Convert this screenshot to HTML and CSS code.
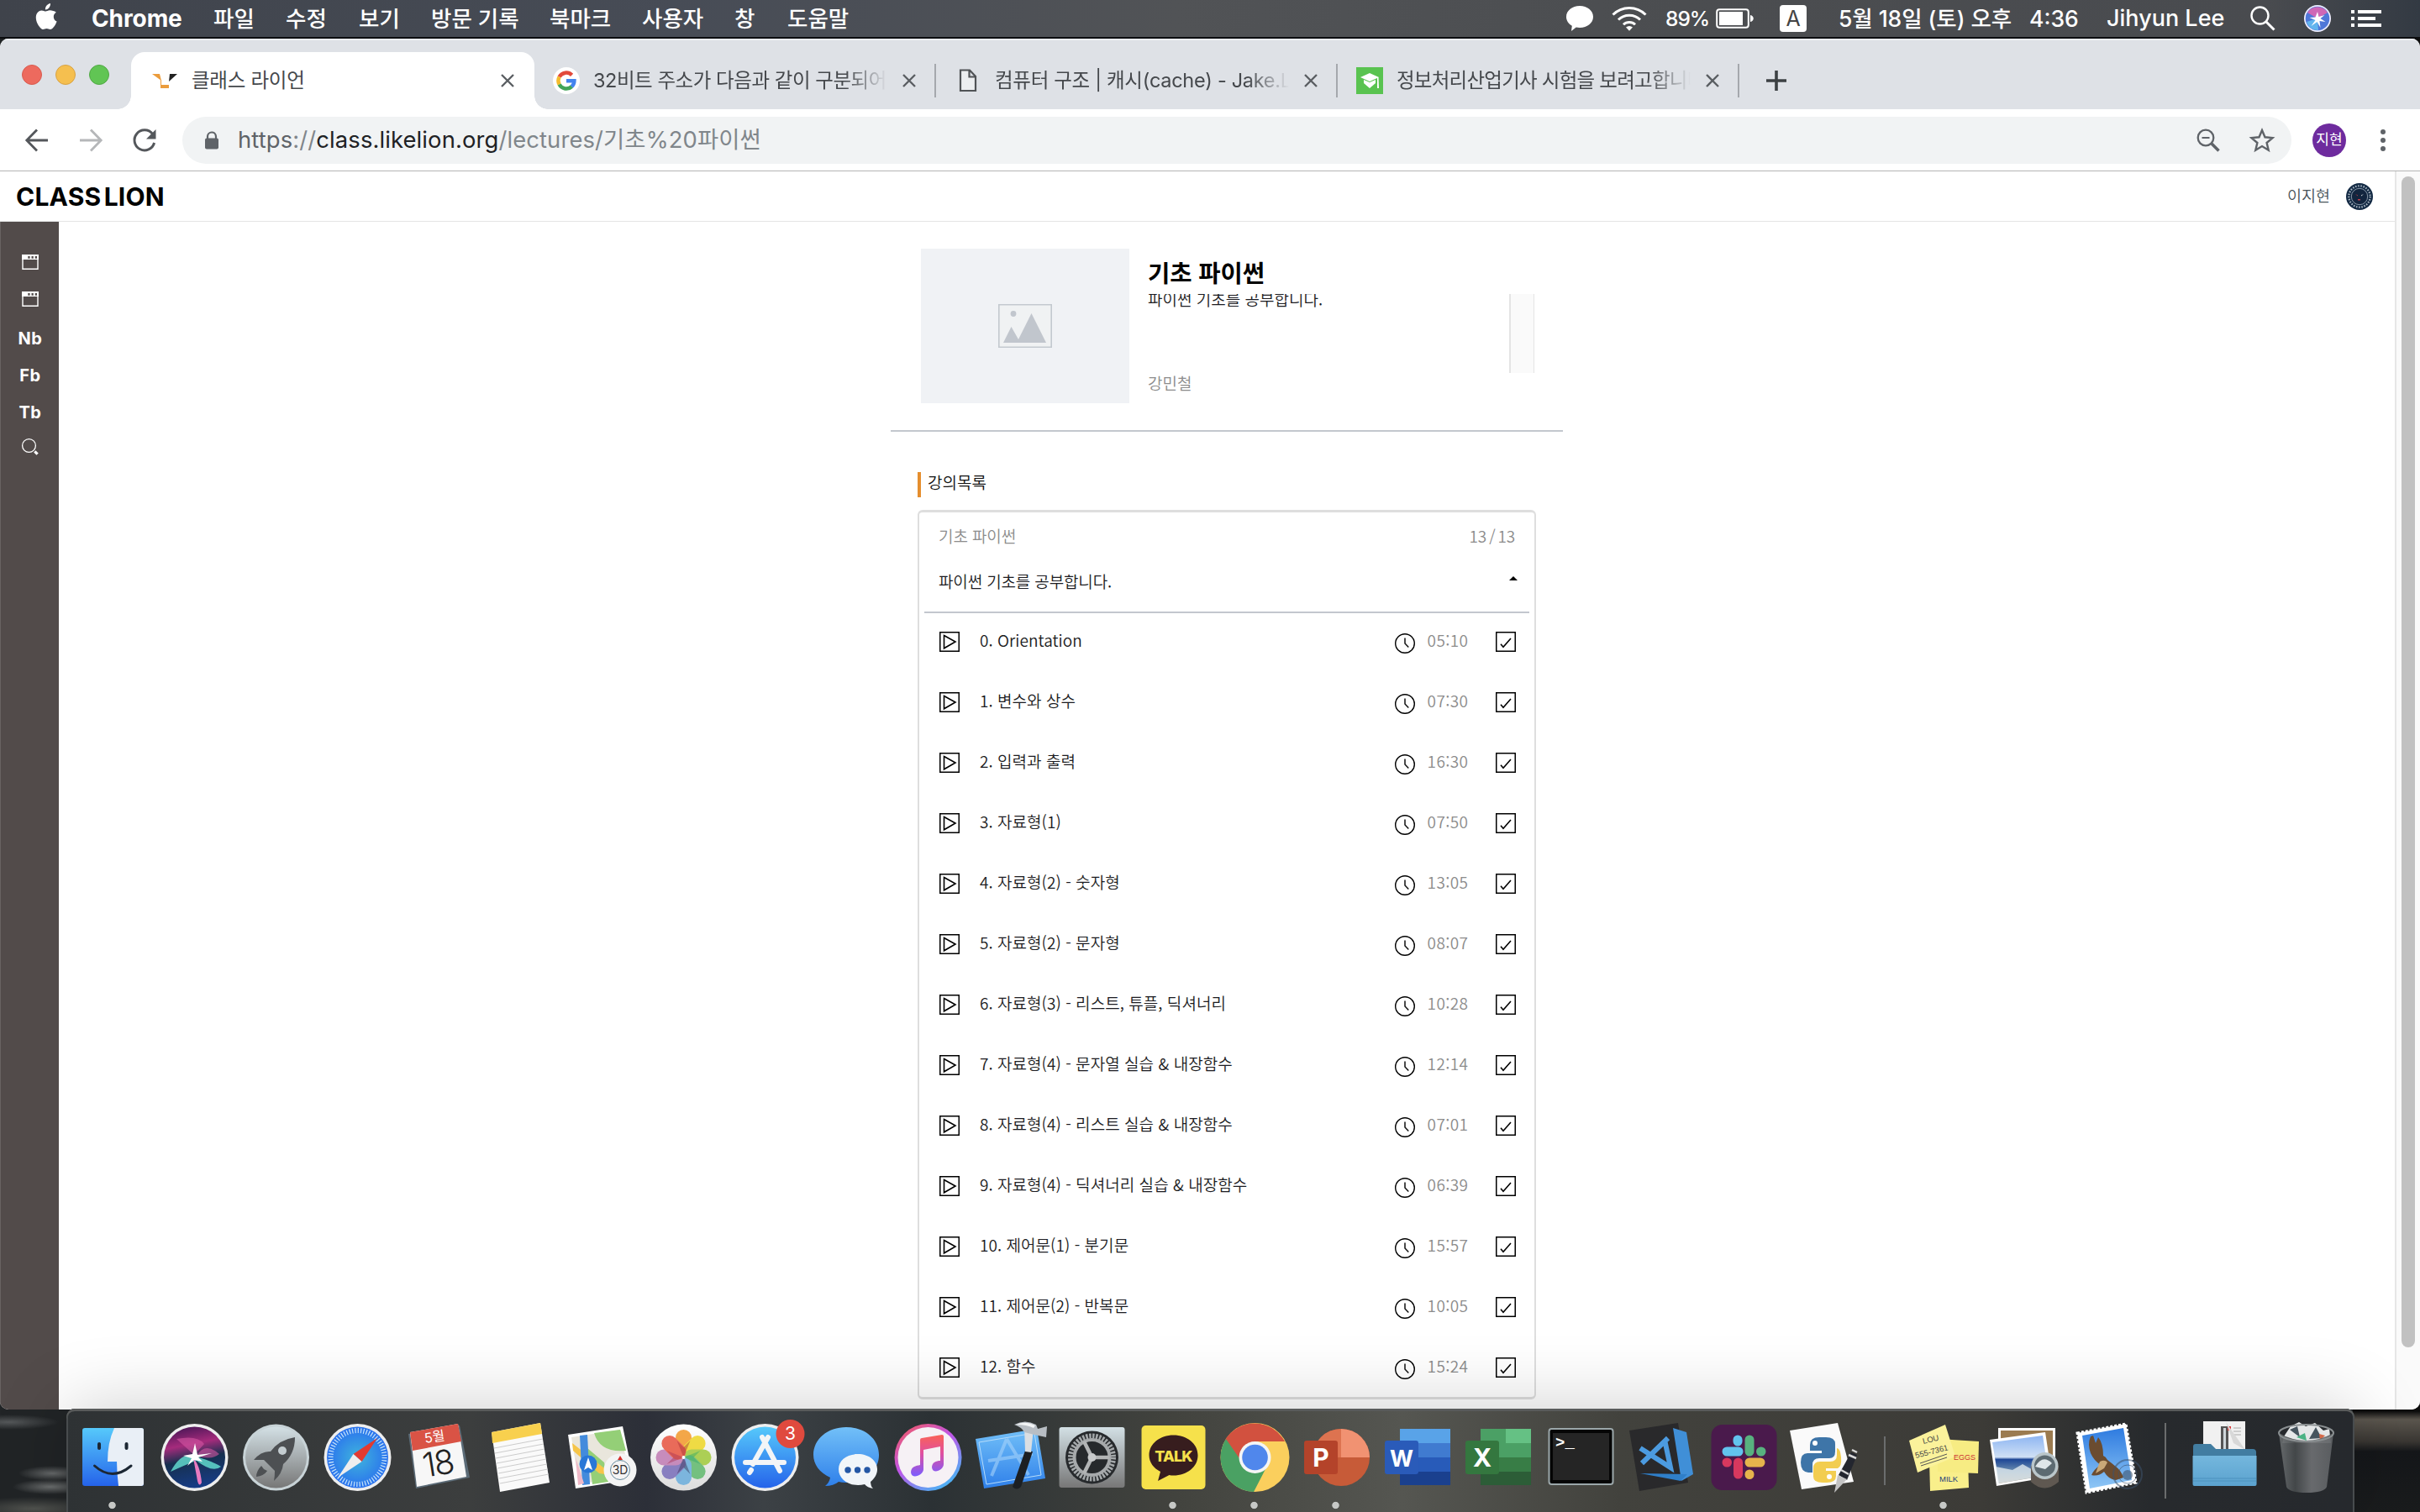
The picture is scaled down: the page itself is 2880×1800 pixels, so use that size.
FILE: index.html
```html
<!DOCTYPE html>
<html lang="ko">
<head>
<meta charset="utf-8">
<title>클래스 라이언</title>
<link rel="stylesheet" href="styles.css">
</head>
<body>
<svg class="defs" width="0" height="0">
  <defs>
    <linearGradient id="gBlue" x1="0" y1="0" x2="0" y2="1"><stop offset="0" stop-color="#56c9fb"/><stop offset="1" stop-color="#2563ea"/></linearGradient>
    <linearGradient id="gMsg" x1="0" y1="0" x2="0" y2="1"><stop offset="0" stop-color="#72c0f8"/><stop offset="1" stop-color="#2f80ea"/></linearGradient>
    <linearGradient id="gWhite" x1="0" y1="0" x2="0" y2="1"><stop offset="0" stop-color="#fff"/><stop offset="1" stop-color="#dcdcdc"/></linearGradient>
    <linearGradient id="gSteel" x1="0" y1="0" x2="0" y2="1"><stop offset="0" stop-color="#d3e0e5"/><stop offset="1" stop-color="#777"/></linearGradient>
    <linearGradient id="gNote" x1="0" y1="0" x2=".7" y2="1"><stop offset="0" stop-color="#fa5a50"/><stop offset=".5" stop-color="#c055e8"/><stop offset="1" stop-color="#48b5f5"/></linearGradient>
    <linearGradient id="gSong" x1="0" y1="0" x2="0" y2="1"><stop offset="0" stop-color="#fa6256"/><stop offset=".45" stop-color="#e04fa0"/><stop offset="1" stop-color="#7a5cff"/></linearGradient>
    <radialGradient id="gSafari"><stop offset="0" stop-color="#3fb4dc"/><stop offset="1" stop-color="#2a72ee"/></radialGradient>
    <linearGradient id="gSiri" x1=".3" y1="0" x2=".5" y2="1"><stop offset="0" stop-color="#4a1657"/><stop offset=".3" stop-color="#a52b7c"/><stop offset=".55" stop-color="#16304f"/><stop offset="1" stop-color="#173c86"/></linearGradient>
    <linearGradient id="gSky" x1="0" y1="0" x2="0" y2="1"><stop offset="0" stop-color="#8db5f2"/><stop offset=".45" stop-color="#cfe0f5"/><stop offset=".5" stop-color="#1e4796"/><stop offset=".75" stop-color="#6d8fb0"/><stop offset="1" stop-color="#b9a78c"/></linearGradient>
    <linearGradient id="gStamp" x1="0" y1="0" x2="0" y2="1"><stop offset="0" stop-color="#2e7be0"/><stop offset="1" stop-color="#8ec6f5"/></linearGradient>
    <linearGradient id="gFolder" x1="0" y1="0" x2="0" y2="1"><stop offset="0" stop-color="#74b7dd"/><stop offset="1" stop-color="#5ba2cf"/></linearGradient>
    <linearGradient id="gBin" x1="0" y1="0" x2="1" y2="0"><stop offset="0" stop-color="#6b6f71"/><stop offset=".3" stop-color="#45494b"/><stop offset=".6" stop-color="#6d6f72"/><stop offset="1" stop-color="#5d6063"/></linearGradient>
    <symbol id="play" viewBox="0 0 24 24"><rect x=".75" y=".75" width="22.5" height="22.5" fill="#fff" stroke="#000" stroke-width="1.5"/><path d="M5.5 4.500 19 12 5.500 19.800Z" fill="none" stroke="#000" stroke-width="1.600"/></symbol>
    <symbol id="clock" viewBox="0 0 24 24"><circle cx="12" cy="12" r="11.300" fill="#fff" stroke="#000" stroke-width="1.400"/><path d="M12 5.500V12l4.300 4.600" fill="none" stroke="#111" stroke-width="1.500"/></symbol>
    <symbol id="check" viewBox="0 0 24 24"><rect x=".75" y=".75" width="22.5" height="22.5" fill="#fff" stroke="#000" stroke-width="1.500"/><path d="m6 14.800 3 3.400L18 8" fill="none" stroke="#000" stroke-width="1.600"/></symbol>
    <symbol id="close" viewBox="0 0 16 16"><path d="m1 1 14 14M15 1 1 15" stroke="#5a5e62" stroke-width="2.400"/></symbol>
    <symbol id="window" viewBox="0 0 20 18"><path d="M1 .8h18v16.400H1z" fill="none" stroke="#fff" stroke-width="1.400"/><path d="M0 0h20v6H0z" fill="#fff"/><path d="M7.300 2h2.300v2.700H7.300zM11.500 2h2.300v2.700h-2.300zM15.700 2H18v2.700h-2.300z" fill="#524b4a"/></symbol>
  </defs>
</svg>

<header class="menubar">
  <svg class="apple" viewBox="0 0 26 32"><path fill="#fff" d="M18 0c.2 2.200-.7 4-1.800 5.400-1.200 1.300-2.700 2.100-4.300 2C11.700 5.400 12.700 3.500 13.800 2.300 15 1 16.700.1 18 0ZM24.800 10.700c-2 1.300-3 2.900-3 5.200 0 2.700 1.500 4.600 3.800 5.500-.8 2.500-2.200 5-4 7.100-1.100 1.300-2.200 2.400-3.800 2.400-1.700 0-2.200-1-4.300-1-2 0-2.700 1-4.300 1-1.600.1-2.800-1.300-3.900-2.600C1.500 23.900-.6 16.600 1.800 12.200 3 9.900 5.300 8.400 7.700 8.400c1.800 0 3.400 1.200 4.500 1.200 1.100 0 3.100-1.400 5.300-1.300 2.200.1 5.500.8 7.300 2.400Z"/></svg>
  <nav class="menus">
    <b>Chrome</b><span class="w86">파일</span><span class="w87">수정</span><span class="w86">보기</span><span class="w141">방문 기록</span><span class="w110">북마크</span><span class="w110">사용자</span><span class="w63">창</span><span>도움말</span>
  </nav>
  <div class="status">
    <svg class="bubble" viewBox="0 0 32 30"><path fill="#fff" d="M16 0c9 0 16 5.600 16 13s-7 13-16 13c-1.500 0-3-.2-4.300-.5L6 30l.8-6.300C2.700 21.400 0 17.500 0 13 0 5.600 7 0 16 0Z"/></svg>
    <svg class="wifi" viewBox="0 0 42 30" fill="none" stroke="#fff" stroke-width="3"><path d="M1.500 10.500a27.500 27.500 0 0 1 39 0M8 16.500a18.500 18.500 0 0 1 26 0M14 22.300a10 10 0 0 1 14 0"/><path d="m17 25.500 4 4.200 4-4.200a6 6 0 0 0-8 0Z" fill="#fff" stroke="none"/></svg>
    <span class="pct">89%</span>
    <svg class="batt" viewBox="0 0 46 24"><rect x="1.200" y="1.200" width="37.600" height="21.600" rx="3" fill="none" stroke="#fff" stroke-width="2"/><path fill="#fff" d="M4 4h28v16H4zM41 8c5 1 5 7 0 8z"/></svg>
    <span class="input">A</span>
    <span class="date">5월 18일 (토) 오후</span><span class="time">4:36</span>
    <span class="user">Jihyun Lee</span>
    <svg class="spot" viewBox="0 0 30 30" fill="none" stroke="#fff"><circle cx="11.500" cy="11.500" r="10" stroke-width="2.400"/><path d="m18.500 18.500 10 10" stroke-width="3"/></svg>
    <svg class="siri-s" viewBox="0 0 32 32"><circle cx="16" cy="16" r="16" fill="#eef"/><circle cx="16" cy="16" r="14.300" fill="#4f77d8"/><path d="M4 9A14 14 0 0 1 28 9l-12 7z" fill="#cf67b6"/><path d="M3 20l13-4 1 14a14 14 0 0 1-14-10z" fill="#62b5ee"/><path d="m16 8 1.500 6 7-2-5 4 6 4-7-1 1 8-4-7-7 5 5-7-7-3 7-.500z" fill="#fff"/></svg>
    <svg class="list" viewBox="0 0 36 20" fill="#fff"><path d="M0 0h4v4H0zM0 8h4v4H0zM0 16h4v4H0zM8 0h28v4H8zM8 8h21v4H8zM8 16h28v4H8z"/></svg>
  </div>
</header>

<main class="window">
  <div class="tabs">
    <div class="lights"><i class="red-dot"></i><i class="yellow"></i><i class="green"></i></div>
    <div class="tab active">
      <svg class="fav" viewBox="0 0 32 32"><path d="M1 8h9l2 8z" fill="#eb9c3c"/><path d="M31 8h-9l-1 9z" fill="#222"/><path d="M11 15h1v6h9v4H11z" fill="#eb9c3c"/></svg>
      <span class="title">클래스 라이언</span><svg class="x"><use href="#close"/></svg>
    </div>
    <div class="tab">
      <svg class="fav" viewBox="0 0 32 32"><circle cx="16" cy="16" r="16" fill="#fff"/><g fill="none" stroke-width="4.500"><path d="M7.600 11.500a9.500 9.500 0 0 1 15-2.100" stroke="#e24a3b"/><path d="M7.600 20.500a9.500 9.500 0 0 1 0-9" stroke="#f5bc2e"/><path d="M22.500 23a9.500 9.500 0 0 1-14.900-2.500" stroke="#41a457"/><path d="M16 16.300h9.400a9.500 9.500 0 0 1-3 6.800" stroke="#4384ee"/></g></svg>
      <span class="title fade t1">32비트 주소가 다음과 같이 구분되어</span><svg class="x"><use href="#close"/></svg><i class="sep"></i>
    </div>
    <div class="tab">
      <svg class="fav" viewBox="0 0 32 32"><path d="M7 3.500h11L25 11v17H7z M17.500 4v7.500H25" fill="#eceef0" stroke="#505356" stroke-width="2.200"/></svg>
      <span class="title fade t2">컴퓨터 구조 | 캐시(cache) - Jake.L</span><svg class="x"><use href="#close"/></svg><i class="sep"></i>
    </div>
    <div class="tab">
      <svg class="fav" viewBox="0 0 32 32"><path fill="#59c350" d="M0 0h32v32H0z"/><path fill="#fff" d="m16 7 11 5-11 5-11-5z"/><path fill="#fff" d="m9 15 7 3 7-3v4l-7 6-7-6zM25 12h1.500l.5 13h-2z"/></svg>
      <span class="title fade t3">정보처리산업기사 시험을 보려고합니다</span><svg class="x"><use href="#close"/></svg><i class="sep"></i>
    </div>
    <svg class="plus" viewBox="0 0 24 24"><path d="M12 0v24M0 12h24" stroke="#3c4043" stroke-width="3.600"/></svg>
  </div>

  <div class="toolbar">
    <svg class="nav" viewBox="0 0 28 28" fill="none" stroke="#54575b" stroke-width="2.800"><path d="M27 14H2M14 1.500 1.800 14 14 26.500"/></svg>
    <svg class="nav" viewBox="0 0 28 28" fill="none" stroke="#b5b7b9" stroke-width="2.800"><path d="M1 14h25M14 1.500 26.200 14 14 26.500"/></svg>
    <svg class="nav" viewBox="0 0 28 28"><path d="M23.500 6.500A12 12 0 1 0 25.600 17" fill="none" stroke="#54575b" stroke-width="3"/><path d="M27.500 1v11.500H16z" fill="#54575b"/></svg>
    <div class="omnibox">
      <svg class="lock" viewBox="0 0 18 22"><path d="M4 9V6.500a5 5 0 0 1 10 0V9" fill="none" stroke="#5f6368" stroke-width="2.200"/><rect y="8.500" x="1" width="16" height="13" rx="2" fill="#5f6368"/></svg>
      <span class="url"><span class="proto">https</span>://<b>class.likelion.org</b>/lectures/기초%20파이썬</span>
      <svg class="mag" viewBox="0 0 28 28" fill="none" stroke="#5f6368"><circle cx="11" cy="11" r="9.300" stroke-width="2.300"/><path d="m18 18 8.500 8.500" stroke-width="3.500"/><path d="M6.500 11h9" stroke-width="2"/></svg>
      <svg class="star" viewBox="0 0 30 30"><path d="m15 3 3.500 8.300 9 .8-6.900 5.900 2.100 8.800L15 22.100l-7.700 4.700 2.100-8.800-6.900-5.900 9-.8z" fill="none" stroke="#5f6368" stroke-width="2.400"/></svg>
    </div>
    <span class="profile">지현</span>
    <svg class="dots" viewBox="0 0 6 26" fill="#5f6368"><circle cx="3" cy="3" r="3"/><circle cx="3" cy="13" r="3"/><circle cx="3" cy="23" r="3"/></svg>
  </div>

  <div class="viewport">
    <div class="page">
      <div class="site-head">
        <strong>CLASS LION</strong>
        <span class="name">이지현</span>
        <svg class="crest" viewBox="0 0 32 32"><circle cx="16" cy="16" r="16" fill="#142b45"/><circle cx="16" cy="16" r="12.700" fill="none" stroke="#aab6c2" stroke-width="2.200" stroke-dasharray="1.500 1.700"/><circle cx="16" cy="16" r="9.700" fill="#12253e" stroke="#8796a6"/><path d="m11 13 3 1.500v1zM14 19h3v1.500h-3z" fill="#c33c4a"/><path d="m21 13-3 1.500v1z" fill="#fff"/></svg>
      </div>
      <div class="columns">
        <aside>
          <svg class="win"><use href="#window"/></svg><svg class="win"><use href="#window"/></svg>
          <b>Nb</b><b>Fb</b><b>Tb</b>
          <svg class="find" viewBox="0 0 20 20"><circle cx="8.500" cy="8.500" r="7.900" fill="none" stroke="#fff" stroke-width="1.300"/><path d="m15.300 15.300 3.300 3.300" stroke="#fff" stroke-width="3.200"/></svg>
        </aside>
        <section class="content">
          <div class="course">
            <div class="thumb"><svg viewBox="0 0 64 52"><path d="M.8.8h62.400v50.400H.8z" fill="#f0f2f3" stroke="#c3c9cf" stroke-width="1.600"/><circle cx="18" cy="11.500" r="3.400" fill="#c1c6cd"/><path d="M6 46 15.500 27 24 42 39.500 11 57 46z" fill="#c1c6cd"/></svg></div>
            <div class="info">
              <h1>기초 파이썬</h1>
              <div class="summary"><p>파이썬 기초를 공부합니다.</p><i></i></div>
              <span class="teacher">강민철</span>
            </div>
          </div>
          <h2>강의목록</h2>
          <div class="card">
            <div class="card-top"><span>기초 파이썬</span><span class="count">13 / 13</span></div>
            <div class="card-desc"><span>파이썬 기초를 공부합니다.</span><svg viewBox="0 0 10 5"><path d="M0 5 5 0l5 5z"/></svg></div>
            <ul>
              <li><svg><use href="#play"/></svg><span>0. Orientation</span><svg class="ck"><use href="#clock"/></svg><time>05:10</time><svg><use href="#check"/></svg></li>
              <li><svg><use href="#play"/></svg><span>1. 변수와 상수</span><svg class="ck"><use href="#clock"/></svg><time>07:30</time><svg><use href="#check"/></svg></li>
              <li><svg><use href="#play"/></svg><span>2. 입력과 출력</span><svg class="ck"><use href="#clock"/></svg><time>16:30</time><svg><use href="#check"/></svg></li>
              <li><svg><use href="#play"/></svg><span>3. 자료형(1)</span><svg class="ck"><use href="#clock"/></svg><time>07:50</time><svg><use href="#check"/></svg></li>
              <li><svg><use href="#play"/></svg><span>4. 자료형(2) - 숫자형</span><svg class="ck"><use href="#clock"/></svg><time>13:05</time><svg><use href="#check"/></svg></li>
              <li><svg><use href="#play"/></svg><span>5. 자료형(2) - 문자형</span><svg class="ck"><use href="#clock"/></svg><time>08:07</time><svg><use href="#check"/></svg></li>
              <li><svg><use href="#play"/></svg><span>6. 자료형(3) - 리스트, 튜플, 딕셔너리</span><svg class="ck"><use href="#clock"/></svg><time>10:28</time><svg><use href="#check"/></svg></li>
              <li><svg><use href="#play"/></svg><span>7. 자료형(4) - 문자열 실습 &amp; 내장함수</span><svg class="ck"><use href="#clock"/></svg><time>12:14</time><svg><use href="#check"/></svg></li>
              <li><svg><use href="#play"/></svg><span>8. 자료형(4) - 리스트 실습 &amp; 내장함수</span><svg class="ck"><use href="#clock"/></svg><time>07:01</time><svg><use href="#check"/></svg></li>
              <li><svg><use href="#play"/></svg><span>9. 자료형(4) - 딕셔너리 실습 &amp; 내장함수</span><svg class="ck"><use href="#clock"/></svg><time>06:39</time><svg><use href="#check"/></svg></li>
              <li><svg><use href="#play"/></svg><span>10. 제어문(1) - 분기문</span><svg class="ck"><use href="#clock"/></svg><time>15:57</time><svg><use href="#check"/></svg></li>
              <li><svg><use href="#play"/></svg><span>11. 제어문(2) - 반복문</span><svg class="ck"><use href="#clock"/></svg><time>10:05</time><svg><use href="#check"/></svg></li>
              <li><svg><use href="#play"/></svg><span>12. 함수</span><svg class="ck"><use href="#clock"/></svg><time>15:24</time><svg><use href="#check"/></svg></li>
            </ul>
          </div>
        </section>
      </div>
    </div>
    <div class="scroll"><i></i></div>
  </div>
</main>

<footer class="dock">
  <!-- Finder -->
  <svg class="app on" viewBox="0 0 97 120"><rect x="12" y="20" width="73" height="69" rx="3" fill="url(#gBlue)"/><path d="M50 20h32q3 0 3 3v63q0 3-3 3H55q-2-15-2-29H42q0-23 8-40z" fill="#e9eff6"/><path d="M32 39v5M64.500 39v5" stroke="#1c2733" stroke-width="4" stroke-linecap="round"/><path d="M26.500 65q21 19 43.500 0" fill="none" stroke="#1c2733" stroke-width="3" stroke-linecap="round"/></svg>
  <!-- Siri -->
  <svg class="app" viewBox="0 0 97 120"><circle cx="48.500" cy="55" r="40" fill="#eee"/><circle cx="48.500" cy="55" r="36.500" fill="url(#gSiri)"/><path d="M48 52 27 33q25-5 33 6zM51 53q10-17 27-2-10 8-27 2z" fill="#d657a4" opacity=".6"/><path d="M20 72q13-25 29-18 20 5 31 12-10 8-29-7-7 2-31 13z" fill="#65e3d5" opacity=".8"/><path d="M47 56q8 8 10 29-3 6-5-2z" fill="#e97bc0"/><path d="m49 38 3 14 17-2-16 5 5 5-10-2-8 7 5-9-10-3 11-2z" fill="#fff"/></svg>
  <!-- Launchpad -->
  <svg class="app" viewBox="0 0 97 120"><circle cx="48.500" cy="55" r="39.500" fill="#c8d3d7"/><circle cx="48.500" cy="55" r="36.500" fill="url(#gSteel)"/><path d="M71 31Q52 34 42 48q-11-1-20 10h12l13 13q0 6-1 12 10-9 11-20 14-12 14-32zM31 65q-6 6-6 13 9-1 13-7l-4-2z" fill="#4d5053"/><circle cx="56" cy="47" r="5" fill="#c4cdd1"/></svg>
  <!-- Safari -->
  <svg class="app" viewBox="0 0 97 120"><circle cx="48.500" cy="55" r="40" fill="#eee"/><circle cx="48.500" cy="55" r="36.500" fill="url(#gSafari)"/><circle cx="48.500" cy="55" r="32" fill="none" stroke="#c8e4fb" stroke-width="6" stroke-dasharray="1.200 2.150"/><path d="m72 32-18.500 28-10-9z" fill="#e33a31"/><path d="M25 79 43.500 51l10 9z" fill="#eee"/></svg>
  <!-- Calendar -->
  <svg class="app" viewBox="0 0 97 120"><path d="m12 27 61-10 12 62-64 13z" fill="#5b6b77"/><path d="m14 25 57-10 10 63-59 12z" fill="#f7f7f7"/><path d="m14 25 57-10 4 21-58 11z" fill="#d95345"/><text x="44" y="36" transform="rotate(-9 44 36)" class="cal-m">5월</text><text x="49" y="76" transform="rotate(-9 49 76)" class="cal-d">18</text></svg>
  <!-- Notes -->
  <svg class="app" viewBox="0 0 97 120"><path d="m14 25 58-11 11 71-59 11z" fill="#fafafa"/><path d="m14 25 58-11 2 13-59 11z" fill="#f8d04e"/><path d="m17 44 58-11M18 50l58-11M19 56l58-11M20 62l58-11M21 68l58-11M22 74l58-11M23 80l58-11M24 86l58-11" stroke="#ccc"/></svg>
  <!-- Maps -->
  <svg class="app" viewBox="0 0 97 120"><path d="m8 28 65-10 13 63-69 11z" fill="#fff"/><path d="m12 31 58-9 11 55-60 10z" fill="#e9e6dc"/><path d="m39 26 31-4 7 25q-31 3-38-21zM31 44l20 17 5 23-19 3z" fill="#94cf77"/><path d="m13 38 37 29 29 4v8L45 74 14 47z" fill="#f6c549"/><path d="m22 29 9-1 3 59-9 1z" fill="#438bdc"/><path d="m17 55 10 31-7 2z" fill="#efb9c8"/><circle cx="32" cy="63" r="10.500" fill="#2877d7"/><path d="m32 55 5 15-5-3-5 3z" fill="#fff"/><circle cx="70" cy="70" r="19.500" fill="#f4f4f4"/><circle cx="70" cy="70" r="11.500" fill="none" stroke="#648a9c"/><path d="m70 53 3 5h-6z" fill="#d72d2a"/><text x="70" y="75" class="t3d">3D</text></svg>
  <!-- Photos -->
  <svg class="app" viewBox="0 0 97 120"><circle cx="48.500" cy="55" r="39.500" fill="url(#gWhite)"/><g transform="translate(48.500 55)" opacity=".92"><rect x="-9.500" y="-33" width="19" height="33" rx="9.500" fill="#f3a03a"/><rect x="-9.500" y="-33" width="19" height="33" rx="9.500" fill="#efd936" transform="rotate(45)"/><rect x="-9.500" y="-33" width="19" height="33" rx="9.500" fill="#a7cd49" transform="rotate(90)"/><rect x="-9.500" y="-33" width="19" height="33" rx="9.500" fill="#6bbd77" transform="rotate(135)"/><rect x="-9.500" y="-33" width="19" height="33" rx="9.500" fill="#74b2dd" transform="rotate(180)"/><rect x="-9.500" y="-33" width="19" height="33" rx="9.500" fill="#8177bd" transform="rotate(225)"/><rect x="-9.500" y="-33" width="19" height="33" rx="9.500" fill="#c484b8" transform="rotate(270)"/><rect x="-9.500" y="-33" width="19" height="33" rx="9.500" fill="#e9604d" transform="rotate(315)"/></g><g transform="translate(48.500 55)" opacity=".45"><path d="M0 0-4-10-8-20 0-12 8-20 4-10z" fill="#a33"/><path d="M0 0 10-4 20-8 12 0 20 8 10 4z" fill="#3a6"/><path d="M0 0 4 10 8 20 0 12-8 20-4 10z" fill="#335"/><path d="M0 0-10 4-20 8-12 0-20-8-10-4z" fill="#a35"/></g><circle cx="48.500" cy="55" r="2" fill="#fff"/></svg>
  <!-- App Store -->
  <svg class="app" viewBox="0 0 97 120"><circle cx="48.500" cy="55" r="40" fill="#eee"/><circle cx="48.500" cy="55" r="36.500" fill="url(#gBlue)"/><path d="m52 31-18 32M45 31l21 40M25 61h46M32 70l-2 3" stroke="#f3f5f7" stroke-width="6" stroke-linecap="round"/><circle cx="78.500" cy="27" r="17" fill="#e04a3e"/><text x="78.500" y="34" class="badge">3</text></svg>
  <!-- Messages -->
  <svg class="app" viewBox="0 0 97 120"><path d="M48 19c22 0 39 14 39 33S70 85 48 85q-5 0-9-1-6 5-16 5 5-4 6-10C16 73 9 63 9 52c0-19 17-33 39-33z" fill="url(#gMsg)"/><path d="M62 51c13 0 23 8 23 18 0 6-3 11-8 15q0 5 3 8-7-1-10-5-4 1-8 1c-13 0-23-8-23-19s10-18 23-18z" fill="#f1f5f9"/><g fill="#2457a5"><circle cx="50" cy="70" r="3.700"/><circle cx="61.500" cy="70" r="3.700"/><circle cx="73" cy="70" r="3.700"/></g></svg>
  <!-- iTunes -->
  <svg class="app" viewBox="0 0 97 120"><circle cx="48.500" cy="55" r="40" fill="url(#gNote)"/><circle cx="48.500" cy="55" r="36" fill="#f6f1f5"/><path d="M39 34q0-2 2-2l24-4q2 0 2 2v33c0 7-13 13-14 4 0-6 5-8 10-8V42l-20 4v23c0 7-14 13-15 4 0-7 6-8 11-9z" fill="url(#gSong)"/></svg>
  <!-- Xcode -->
  <svg class="app" viewBox="0 0 97 120"><path d="m7 33 73-12 10 59-73 12z" fill="url(#gMsg)"/><path d="m11 37 66-11 8 50-65 11z" fill="none" stroke="#b6dcfa"/><path d="m44 33-18 44M44 33l26 43M22 59l53-8" stroke="#a5d2fa" stroke-width="4" fill="none" opacity=".6"/><path d="m66 47 9 1-14 42q-5 5-10 0z" fill="#1c1f23"/><path d="m65 18 11 2-3 29-7-1z" fill="#dadee2"/><path d="M53 16q13-7 26 0l2 5 11-3-1 13-14-3-12-3q-3-6-12-9z" fill="#b8bec4"/><path d="M55 16q12-5 23 1l-2 3q-8-4-21-4z" fill="#f2f4f5"/></svg>
  <!-- System Preferences -->
  <svg class="app" viewBox="0 0 97 120"><rect x="9.500" y="19" width="78" height="72" rx="3" fill="url(#gSteel)"/><circle cx="48.500" cy="55" r="31.500" fill="#26292c"/><circle cx="48.500" cy="55" r="25.500" fill="none" stroke="#a4a8aa" stroke-width="6" stroke-dasharray="2.500 1.500"/><circle cx="48.500" cy="55" r="21" fill="none" stroke="#a6a9ab" stroke-width="4"/><path d="M48.500 55 39 36M48.500 55h21M48.500 55 39 74" stroke="#b2b4b5" stroke-width="4.500"/><circle cx="48.500" cy="55" r="5" fill="#c8cacb"/></svg>
  <!-- KakaoTalk -->
  <svg class="app on" viewBox="0 0 97 120"><rect x="10.500" y="17" width="76" height="76" rx="5" fill="#f6e14b"/><path d="M48.500 28.500c16 0 29 10 29 24s-13 24-29 24q-3 0-5-.500L30 83l3-11c-8-4-13.500-11-13.500-19.500 0-14 13-24 29-24z" fill="#371d1e"/><text x="48.500" y="59.500" class="talk">TALK</text></svg>
  <!-- Chrome -->
  <svg class="app on" viewBox="0 0 97 120"><circle cx="48.500" cy="55" r="41" fill="#fbcf5d"/><path d="M13 34a41 41 0 0 1 71 2H48.500L30 63z" fill="#d2513f"/><path d="M14 33a41 41 0 0 0 33 63L62 67 36 65z" fill="#4aa163"/><circle cx="48.500" cy="55" r="19" fill="#f5f5f5"/><circle cx="48.500" cy="55" r="15.300" fill="#5087ec"/></svg>
  <!-- PowerPoint -->
  <svg class="app on" viewBox="0 0 97 120"><circle cx="54" cy="55" r="34" fill="#c75b38"/><path d="M54 21v34H20a34 34 0 0 1 34-34z" fill="#dd7350"/><path d="M54 21a34 34 0 0 1 34 34H54z" fill="#f19272"/><rect x="10" y="35" width="40" height="40" rx="3" fill="#b4432a"/><text x="30" y="66" class="office">P</text></svg>
  <!-- Word -->
  <svg class="app" viewBox="0 0 97 120"><path fill="#59a3e8" d="M27 21h60v17H27z"/><path fill="#407bd0" d="M27 38h60v17H27z"/><path fill="#285bb9" d="M27 55h60v17H27z"/><path fill="#1a408e" d="M27 72h60v16H27z"/><rect x="9" y="35" width="40" height="40" rx="3" fill="#2a5bb9"/><text x="29" y="66" class="office w">W</text></svg>
  <!-- Excel -->
  <svg class="app" viewBox="0 0 97 120"><path fill="#4ba065" d="M26 21h60v34H26z"/><path fill="#65c184" d="M56 21h30v17H56z"/><path fill="#387d46" d="M26 55h60v17H26z"/><path fill="#2c5d37" d="M26 72h60v16H26z"/><rect x="8" y="35" width="40" height="40" rx="3" fill="#34773f"/><text x="28" y="66" class="office">X</text></svg>
  <!-- Terminal -->
  <svg class="app" viewBox="0 0 97 120"><rect x="10.500" y="21" width="76" height="66" rx="3" fill="#050505" stroke="#9ba7aa" stroke-width="2"/><path fill="#252525" d="M15 26h67v56H15z"/><text x="18" y="43" class="term">&gt;_</text></svg>
  <!-- VS Code -->
  <svg class="app" viewBox="0 0 97 120"><path d="m9 23 58-9 12 71-58 10z" fill="#29292b"/><path d="m61 20 16 5 8 50-14 8z" fill="#408fd7"/><path d="m55 32-31 30M22 44l36 23-7-33" fill="none" stroke="#4c9be0" stroke-width="6"/><path d="m22 74 56 1-8 8z" fill="#2f7fc9"/></svg>
  <!-- Slack -->
  <svg class="app" viewBox="0 0 97 120"><rect x="9.500" y="16" width="78" height="78" rx="13" fill="#4a1a4c"/><path d="M41 34v2M28 48h14" stroke="#62c4ee" stroke-width="11" stroke-linecap="round"/><path d="M55 34v14M68.500 48h.5" stroke="#58b17f" stroke-width="11" stroke-linecap="round"/><path d="M28 61h.5M41.500 61v14" stroke="#d6385e" stroke-width="11" stroke-linecap="round"/><path d="M55 61h13M55 75v.5" stroke="#e5b44c" stroke-width="11" stroke-linecap="round"/></svg>
  <!-- IDLE -->
  <svg class="app" viewBox="0 0 97 120"><path d="m6 23 57-9 19 70-62 9z" fill="#fafafa"/><path d="M41 31q-11 0-11 9v7h14v3H27q-8 0-8 11t9 12h5v-9q0-8 8-8h12q7 0 7-8V39q0-8-11-8z" fill="#3e75a8"/><path d="M62 44v8q0 8-8 8H42q-8 0-8 8v10q0 7 11 7h5q11 0 11-8v-6H49v-3h14q5-2 4-13-1-11-5-11z" fill="#f2cd50"/><circle cx="36" cy="38" r="3" fill="#fff"/><circle cx="53" cy="78" r="3" fill="#fff"/><path d="m64 76 15-27 7 3-12 30z" fill="#23262f"/><path d="m59 97 4-21 11 5z" fill="#c4c4c4"/><path d="m67 70 9 5M76 52l9 4M80 46l6 3" stroke="#d8d8d8" stroke-width="2.500"/></svg>
  <i class="rule short"></i>
  <!-- Stickies -->
  <svg class="app on" viewBox="0 0 97 120"><path d="m31 57 46-1 1 35-46 4z" fill="#f9ef8b"/><path d="m42 33 48 3-1 38-48-2z" fill="#f7ec83"/><path d="m7 35 43-19 12 38-45 19z" fill="#fbf29b"/><text x="24" y="39" transform="rotate(-14 24 39)" class="ink">LOU</text><text x="15" y="56" transform="rotate(-14 15 56)" class="ink">555-7361</text><text x="60" y="58" class="ink red">EGGS</text><text x="43" y="84" class="ink blue">MILK</text><path d="m20 62 32-11M21 65l31-10" stroke="#555"/></svg>
  <!-- Preview -->
  <svg class="app" viewBox="0 0 97 120"><path fill="#fff" d="M16 20h68v53H16z"/><path fill="#9b7b50" d="M19 23h62v47H19z"/><path d="m6 34 66-9 8 53-66 11z" fill="#fff"/><path d="m9 37 60-8 7 47-59 10z" fill="url(#gSky)"/><path d="m13 66 20 4 12-7 14 8 14-7 2 12-59 10z" fill="#dfe8ee" opacity=".8"/><path d="M55 65v19q16 15 33 0V65z" fill="#5f5851"/><circle cx="71.500" cy="65" r="16" fill="#bac6ca"/><circle cx="71.500" cy="65" r="12.500" fill="#5d6b72"/><path d="M60 66q9-15 20-4l-8 7z" fill="#dfe6e9"/></svg>
  <!-- Mail -->
  <svg class="app" viewBox="0 0 97 120"><path d="m13 26 58-11 12 70-59 12z" fill="#fff" stroke="#fff" stroke-width="3" stroke-dasharray="3 2"/><path d="m19 29 49-9 10 62-50 10z" fill="url(#gStamp)"/><path d="M29 30q-4 9 0 20 4 9 12 14-8 5-11 12 8 2 15-4 5 9 14 10l9-3q-3-9-9-13-6-5-10-8-2-4-5-5 0-15-6-22l-3 7-3-9z" fill="#6b4c30"/><path d="M40 60q6-3 9 1l-4 7-10 6q3-9 5-14z" fill="#c9a878"/><circle cx="73" cy="75" r="17" fill="none" stroke="#3c526c" stroke-width="2" opacity=".55"/><circle cx="73" cy="75" r="11" fill="none" stroke="#3c526c" opacity=".6"/><circle cx="73" cy="76" r="6" fill="#3c526c" opacity=".6"/></svg>
  <i class="rule"></i>
  <!-- Downloads -->
  <svg class="app" viewBox="0 0 97 120"><path d="M23 12h50v40H23z" fill="#f1f1f1"/><path d="M44 18h9v28h-9z" fill="#555"/><path d="M47 20h3v26h-3z" fill="#cfd6da"/><path d="M52 18h4v5h-4z" fill="#d33"/><path d="M59 20h9M59 24h9M59 28h9" stroke="#aaa"/><path d="m50 13 23 33-14-8z" fill="#d8d8d8"/><path d="M11 42q0-3 3-3h18l6 6h44q4 0 4 4v33H11z" fill="#427da1"/><path d="M10.500 53h76v34q0 2-2 2h-72q-2 0-2-2z" fill="url(#gFolder)"/><path d="M11 80h75M11 83h75" stroke="#4d92bd"/></svg>
  <!-- Trash -->
  <svg class="app" viewBox="0 0 97 120"><path d="m22 30 8-12 10-5 8 5 11-4 10 9 7-2 2 17H20z" fill="#e5e7e8"/><path d="m29 22 9-4 3 13zM52 33l8-14 7 13z" fill="#46545e"/><path d="m37 31 10-5 2 9z" fill="#4bb284"/><path d="m64 27 7 2-6 6z" fill="#d56a4a"/><path d="M16 26q32 18 65 0l-8 64q-3 7-24 7t-24-7z" fill="url(#gBin)" opacity=".93"/><ellipse cx="48.500" cy="26" rx="32.500" ry="10" fill="none" stroke="#8b9092" stroke-width="2"/></svg>
</footer>
</body>
</html>
```
FILE: styles.css
```css
* { box-sizing: border-box; }
body {
  margin: 0;
  width: 2880px;
  height: 1800px;
  overflow: hidden;
  display: flex;
  flex-direction: column;
  font-family: Inter, "Noto Sans CJK KR", sans-serif;
  background:
    radial-gradient(ellipse 60px 9px at 10px 1693px, #55585a, transparent),
    radial-gradient(ellipse 40px 9px at 62px 1754px, #66696a, transparent),
    radial-gradient(ellipse 45px 9px at 60px 1770px, #6b6e6e, transparent),
    radial-gradient(ellipse 90px 14px at 40px 1796px, #50524e, transparent),
    linear-gradient(#0d0d0d 1680px, #5b564e 1690px, #3a3733 1716px, #15171a 1728px, #1a1c1d 1800px) 2800px 0 / 80px 1800px no-repeat,
    #212426;
}
svg { display: block; flex: none; overflow: visible; }
.defs { position: absolute; }
i { display: block; flex: none; }

/* menu bar */
.menubar {
  flex: none;
  height: 46px;
  display: flex;
  align-items: center;
  border-bottom: 2px solid #0c0d10;
  background: linear-gradient(90deg, #3f434b 0, #474c56 800px, #515356 1400px, #4b4d50 2000px, #494b4f 2700px, #333a43 2880px);
  color: #fff;
  font-size: 26.500px;
  font-weight: 500;
  white-space: nowrap;
  padding-left: 42px;
}
.apple { width: 26px; height: 32px; margin: -5px 41px 0 0; }
.menus { display: flex; line-height: 44px; }
.menus b { width: 145px; font-size: 28px; font-weight: 700; letter-spacing: -.1px; }
.w86 { width: 86px; }
.w87 { width: 87px; }
.w141 { width: 141px; }
.w110 { width: 110px; }
.w63 { width: 63px; }
.status { display: flex; align-items: center; margin-left: auto; width: 1016px; line-height: 44px; }
.bubble { width: 32px; height: 30px; margin-right: 22px; }
.wifi { width: 42px; height: 30px; margin-right: 22px; }
.pct { width: 60px; font-size: 24.500px; letter-spacing: -1px; }
.batt { width: 46px; height: 24px; margin-right: 30px; }
.input { width: 32px; height: 32px; border-radius: 4px; background: #fff; color: #444; line-height: 32px; text-align: center; font-size: 25px; font-weight: 400; margin-right: 38px; }
.date { width: 227px; letter-spacing: -.05px; }
.time { width: 92px; }
.user { width: 171px; font-size: 27px; letter-spacing: 0; }
.spot { width: 30px; height: 30px; margin-right: 34px; }
.siri-s { width: 32px; height: 32px; margin-right: 24px; }
.list { width: 36px; height: 20px; }

/* browser window */
.window {
  flex: none;
  height: 1632px;
  display: flex;
  flex-direction: column;
  overflow: hidden;
  border-radius: 10px;
  background: #fff;
}
.tabs { flex: none; height: 84px; display: flex; background: #dee1e6; border-top: 2px solid #eceef1; padding-top: 14px; }
.lights { width: 156px; display: flex; gap: 16px; padding: 15px 0 0 26px; }
.lights i { width: 24px; height: 24px; border-radius: 50%; border: 1px solid #d85a4e; background: #ed6a5e; }
.lights .yellow { background: #f5bf4f; border-color: #d8a243; }
.lights .green { background: #61c554; border-color: #50a844; }
.tab { width: 478px; display: flex; align-items: center; padding-left: 22px; position: relative; color: #45484c; }
.tab.active { width: 480px; background: #fff; border-radius: 16px 16px 0 0; padding-left: 24px; }
.tab.active::before, .tab.active::after { content: ""; position: absolute; bottom: 0; width: 16px; height: 16px; }
.tab.active::before { left: -16px; background: radial-gradient(circle at 0 0, transparent 15.500px, #fff 16px); }
.tab.active::after { right: -16px; background: radial-gradient(circle at 100% 0, transparent 15.500px, #fff 16px); }
.fav { width: 32px; height: 32px; }
.title { width: 350px; margin-left: 16px; font-size: 23.500px; line-height: 40px; white-space: nowrap; letter-spacing: -.25px; }
.t1 { letter-spacing: -.45px; }
.t2 { letter-spacing: -.3px; }
.t3 { letter-spacing: -.75px; }
.fade { -webkit-mask-image: linear-gradient(90deg, #000 300px, transparent 350px); mask-image: linear-gradient(90deg, #000 300px, transparent 350px); }
.x { width: 16px; height: 16px; margin-left: 18px; }
.sep { width: 2px; height: 40px; background: #a5a8ad; margin-left: 22px; }
.plus { width: 24px; height: 24px; margin: 22px 0 0 32px; }
.toolbar { flex: none; height: 74px; border-bottom: 1px solid #b4b4b4; display: flex; align-items: center; padding-left: 30px; }
.nav { width: 28px; height: 28px; margin-right: 36px; }
.omnibox { width: 2510px; height: 56px; border-radius: 28px; background: #f1f3f4; display: flex; align-items: center; padding-left: 26px; margin-left: -5px; }
.lock { width: 18px; height: 22px; }
.url { margin: -1px 0 0 22px; width: 2331px; font-size: 27.400px; letter-spacing: .12px; color: #80868b; line-height: 50px; }
.url b { font-weight: 400; color: #202124; }
.proto { color: #5f6368; }
.mag { width: 28px; height: 28px; }
.star { width: 30px; height: 30px; margin-left: 35px; }
.profile { width: 40px; height: 40px; border-radius: 50%; background: #6e2b9e; color: #fff; font-size: 17px; line-height: 39px; text-align: center; margin-left: 25px; }
.dots { width: 6px; height: 26px; margin-left: 41px; }

/* page */
.viewport { flex: 1; display: flex; font-family: "Noto Sans CJK KR", sans-serif; font-weight: 350; min-height: 0; }
.page { width: 2850px; display: flex; flex-direction: column; }
.scroll { width: 30px; background: #fafafa; border-left: 2px solid #e6e6e6; padding: 6px; }
.scroll i { width: 16px; height: 1394px; border-radius: 8px; background: #c1c1c1; }
.site-head { flex: none; height: 60px; border-bottom: 1px solid #e4e4e4; display: flex; align-items: center; padding-left: 19px; }
.site-head strong { flex: 1; font: 700 30px/62px Inter, sans-serif; color: #000; letter-spacing: .2px; word-spacing: -4px; }
.name { font-size: 18.500px; color: #485359; margin-top: -4px; }
.crest { width: 32px; height: 32px; margin: 0 26px 0 19px; }
.columns { flex: 1; display: flex; min-height: 0; }
aside { width: 70px; background: #524b4a; border-left: 1px solid #686261; display: flex; flex-direction: column; align-items: center; padding: 39px 0 0 1px; color: #fff; }
.win { width: 20px; height: 18px; margin-bottom: 26px; }
aside b { font: 700 20px/44px Inter, sans-serif; letter-spacing: .6px; }
aside b:nth-of-type(1) { margin-top: -10px; }
.find { width: 20px; height: 20px; margin-top: 9px; }
.content { width: 800px; margin-left: 990px; }
.course { height: 250px; border-bottom: 2px solid #c3c7ce; padding: 32px 34px 0 36px; display: flex; }
.thumb { width: 248px; height: 184px; background: #f0f2f5; display: grid; place-items: center; }
.thumb svg { width: 64px; height: 52px; }
.info { margin-left: 22px; width: 460px; height: 184px; display: flex; flex-direction: column; }
h1 { margin: 0; height: 54px; font-size: 28.600px; font-weight: 700; line-height: 56px; color: #000; letter-spacing: -.1px; }
.summary { height: 94px; display: flex; justify-content: space-between; overflow: hidden; font-size: 19px; color: #1c1c22; }
.summary p { margin: -8px 0 0; line-height: 28px; }
.summary i { width: 30px; border: solid #e4e4e4; border-width: 0 1px 0 2px; background: #fafafa; }
.teacher { font-size: 19px; line-height: 24px; color: #8c8c8c; }
h2 { margin: 48px 0 15px 32px; height: 30px; border-left: 4px solid #e58e2e; padding-left: 8px; font-size: 19px; line-height: 24px; font-weight: 350; color: #111; }
.card { width: 736px; height: 1059px; margin-left: 32px; border: 2px solid #dedede; border-top-width: 3px; border-bottom-width: 3px; border-radius: 6px; padding: 0 6px; font-size: 19px; }
.card-top { display: flex; justify-content: space-between; height: 58px; padding: 14px 17px 0 17px; line-height: 28px; color: #8c8c8c; letter-spacing: -.1px; }
.count { word-spacing: -2px; letter-spacing: -.2px; }
.card-desc { display: flex; justify-content: space-between; height: 62px; padding: 10px 14px 0 17px; line-height: 28px; color: #1c1c22; border-bottom: 2px solid #c3c7ce; letter-spacing: -.15px; }
.card-desc svg { width: 10px; height: 5px; margin-top: 8px; }
ul { list-style: none; margin: -2px 0 0; padding: 0 16px 0 18px; }
li { height: 72px; display: flex; align-items: center; color: #1c1c22; }
li svg { width: 24px; height: 24px; }
li span { flex: 1; margin: -6px 0 0 24px; letter-spacing: .05px; }
.ck { margin-top: 4px; }
time { width: 96px; padding-right: 18px; text-align: center; color: #8c8c8c; margin-top: -6px; letter-spacing: .4px; }

/* dock */
.dock {
  width: 2723px;
  height: 123px;
  margin: -1px 0 0 79px;
  padding: 3px 0 0 7px;
  display: flex;
  flex: none;
  position: relative;
  border-radius: 10px 10px 0 0;
  box-shadow: 0 0 90px rgba(0, 0, 0, .2), inset 0 3px 0 #595b5b, inset 2px 0 0 #484c4e, inset -2px 0 0 #484c4e;
  background: linear-gradient(90deg, #2e3234 0, #3c3e3e 480px, #2c2f38 690px, #3c4145 830px, #2b3134 1030px, #42433e 1320px, #555651 1590px, #42423d 1850px, #3c3b37 2280px, #272a2d 2480px, #26292d 2723px);
}
.app { width: 97.050px; height: 120px; }
.on { background: radial-gradient(circle at 47.500px 112px, #c6c8c6 3.800px, transparent 4.600px); }
.rule { width: 2px; height: 90px; margin: 14px 21px 0 20.500px; background: #6b6d6d; }
.short { height: 58px; margin-top: 30px; }
.cal-m { font-size: 16px; fill: #fff; text-anchor: middle; }
.cal-d { font-size: 40px; font-weight: 300; fill: #222; text-anchor: middle; letter-spacing: -2px; }
.t3d { font-size: 14px; fill: #333; text-anchor: middle; }
.badge { font-size: 21px; fill: #fff; text-anchor: middle; }
.talk { font-size: 18px; font-weight: 800; fill: #f6e14b; text-anchor: middle; letter-spacing: -.8px; }
.office { font-size: 30px; font-weight: 700; fill: #fff; text-anchor: middle; }
.office.w { font-size: 27px; }
.term { font: 700 19px "Liberation Mono", monospace; fill: #fff; }
.ink { font: 9.500px "Liberation Sans", sans-serif; fill: #444; }
.ink.red { font-size: 9px; fill: #c33; }
.blue { fill: #24407a; }
```
